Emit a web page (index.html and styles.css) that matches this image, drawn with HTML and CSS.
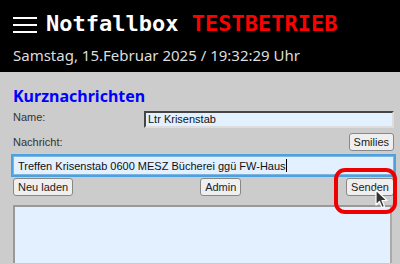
FILE: index.html
```html
<!DOCTYPE html>
<html lang="de">
<head>
<meta charset="utf-8">
<title>Notfallbox</title>
<link rel="stylesheet" href="styles.css">
</head>
<body>
<header class="header">
  <div class="title-row">
    <svg class="burger" width="24" height="18" viewBox="0 0 24 18">
      <rect x="0" y="1" width="24" height="2" fill="#fff"/>
      <rect x="0" y="8" width="24" height="2" fill="#fff"/>
      <rect x="0" y="15" width="24" height="2" fill="#fff"/>
    </svg>
    <h1 class="title">Notfallbox <span class="test">TESTBETRIEB</span></h1>
  </div>
  <div class="date">Samstag, 15.Februar 2025 / 19:32:29 Uhr</div>
</header>
<main class="main">
  <h2 class="heading">Kurznachrichten</h2>
  <div class="row row-name">
    <label class="label">Name:</label>
    <input class="field name-field" type="text" value="Ltr Krisenstab">
  </div>
  <div class="row row-msg">
    <label class="label">Nachricht:</label>
    <button class="btn">Smilies</button>
  </div>
  <div class="msg-wrap">
    <div class="field msg-field">Treffen Krisenstab 0600 MESZ Bücherei ggü FW-Haus<span class="caret"></span></div>
  </div>
  <div class="actions">
    <button class="btn">Neu laden</button>
    <button class="btn btn-admin">Admin</button>
    <div class="send-wrap">
      <button class="btn">Senden</button>
      <span class="highlight"></span>
      <svg class="pointer" width="14" height="20" viewBox="0 0 14 20">
        <path d="M1 1 L1 16 L4.5 12.5 L7 18.5 L9.5 17.5 L7 11.5 L12 11.5 Z" fill="#333" stroke="#fff" stroke-width="1.2" stroke-linejoin="round"/>
      </svg>
    </div>
  </div>
  <div class="messages"></div>
</main>
</body>
</html>
```
FILE: styles.css
```css
html, body {
  margin: 0;
  padding: 0;
}
body {
  width: 400px;
  height: 264px;
  overflow: hidden;
  background: #cccccc;
  font-family: "Liberation Sans", Arial, sans-serif;
}
.header {
  background: #000;
  height: 72px;
  box-sizing: border-box;
  padding: 9px 13px 0;
}
.title-row {
  display: flex;
  align-items: center;
  gap: 9px;
  height: 30px;
}
.burger {
  display: block;
  margin-top: 2px;
}
.title {
  margin: 0;
  font-family: "DejaVu Sans Mono", monospace;
  font-weight: bold;
  font-size: 22px;
  line-height: 30px;
  color: #fff;
  white-space: nowrap;
}
.test {
  color: #ff0000;
}
.date {
  font-family: "Noto Sans", sans-serif;
  font-size: 15px;
  line-height: 20px;
  color: #dddddd;
  margin-top: 6px;
}
.main {
  padding: 14px 6px 0 13px;
}
.heading {
  margin: 0;
  font-family: "Noto Sans", sans-serif;
  font-weight: bold;
  font-size: 16px;
  line-height: 20px;
  color: #0000ff;
}
.row {
  display: flex;
  justify-content: space-between;
  align-items: center;
}
.row-name {
  margin-top: 4px;
  height: 18px;
}
.row-name .label {
  align-self: flex-start;
  margin-top: 1px;
}
.row-msg {
  margin-top: 4px;
  height: 20px;
}
.label {
  font-size: 11px;
  color: #333;
}
.field {
  box-sizing: border-box;
  background: #e2f0ff;
  font-family: "Liberation Sans", Arial, sans-serif;
  font-size: 11px;
  color: #111;
}
.name-field {
  width: 250px;
  height: 17px;
  margin: 0;
  border: 2px inset #aaa;
  border-color: #999 #ddd #ddd #999;
  padding: 0 2px;
}
.msg-wrap {
  margin-top: 4px;
}
.msg-field {
  width: 381px;
  height: 19px;
  border: 1px solid #7db5e0;
  outline: 2px solid #4aa3e0;
  outline-offset: 0;
  padding: 2px 4px;
  line-height: 14px;
  white-space: nowrap;
}
.caret {
  display: inline-block;
  width: 1px;
  height: 13px;
  background: #000;
  vertical-align: -2px;
}
.btn {
  font-family: "Liberation Sans", Arial, sans-serif;
  font-size: 11px;
  color: #222;
  background: #efefef;
  border: 1px solid #888;
  border-radius: 3px;
  padding: 0 4px;
  height: 18px;
  line-height: 16px;
}
.actions {
  margin-top: 3px;
  display: flex;
  align-items: center;
  width: 381px;
}
.btn-admin {
  margin-left: 127px;
}
.send-wrap {
  position: relative;
  margin-left: auto;
}
.send-wrap .btn {
  display: block;
}
.highlight {
  position: absolute;
  left: -12px;
  top: -10px;
  width: 63px;
  height: 46px;
  box-sizing: border-box;
  border: 4px solid #ee0000;
  border-radius: 11px;
}
.pointer {
  position: absolute;
  left: 29px;
  top: 11px;
}
.messages {
  margin-top: 9px;
  width: 379px;
  height: 58px;
  box-sizing: border-box;
  background: #e2f0ff;
  border: 2px solid;
  border-color: #999 #aaa #aaa #999;
  border-bottom: none;
}
```
